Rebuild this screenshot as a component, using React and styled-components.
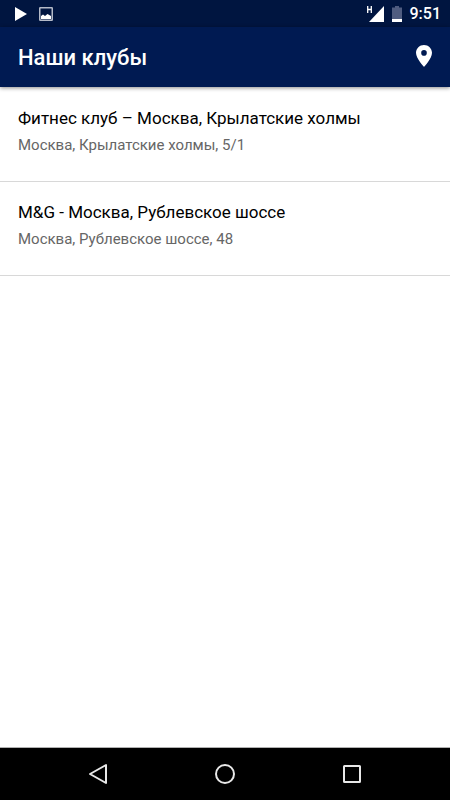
import styled, { createGlobalStyle } from 'styled-components';

const GlobalStyle = createGlobalStyle`
    * {
        box-sizing: border-box;
    }

    body {
        margin: 0;
        background: #fff;
        font-family: Roboto, 'Noto Sans', sans-serif;
    }
`;

const Screen = styled.div`
    display: flex;
    flex-direction: column;
    min-height: 100vh;
`;

const StatusBar = styled.div`
    display: flex;
    justify-content: space-between;
    align-items: center;
    height: 27px;
    padding: 0 9px 0 15px;
    background: #001540;
    color: #fff;
`;

const StatusGroup = styled.div`
    display: flex;
    align-items: center;
    gap: ${props => props.$gap};
`;

const Clock = styled.time`
    font-size: 16px;
    line-height: 20px;
    font-weight: 500;
`;

const AppBar = styled.header`
    display: flex;
    justify-content: space-between;
    align-items: center;
    height: 60px;
    padding: 0 14px 0 18px;
    background: #001a52;
    color: #fff;
    box-shadow: 0 1px 4px rgba(0, 0, 0, 0.45);
`;

const Title = styled.h1`
    margin: 0;
    padding-top: 2px;
    font-size: 22px;
    line-height: 28px;
    font-weight: 500;
`;

const IconButton = styled.button`
    display: flex;
    justify-content: center;
    align-items: center;
    padding: 0;
    border: 0;
    background: none;
    color: inherit;
    cursor: pointer;
`;

const ClubList = styled.ul`
    flex: 1;
    list-style: none;
    margin: 0;
    padding: 1px 0 0;
`;

const ClubItem = styled.li`
    padding: 17px 18px 25px;
    border-bottom: 1px solid #d8d8d8;
`;

const ClubName = styled.h2`
    margin: 0 0 3px;
    color: #000;
    font-size: 17px;
    line-height: 26px;
    font-weight: 400;
`;

const ClubAddress = styled.p`
    margin: 0;
    color: #666;
    font-size: 15px;
    line-height: 22px;
`;

const NavBar = styled.nav`
    display: grid;
    grid-template-columns: repeat(3, 1fr);
    height: 53px;
    padding: 0 34px;
    border-top: 1px solid #b0b0b0;
    background: #000;
    color: #e8e8e8;
`;

const clubs = [
    { name: 'Фитнес клуб – Москва, Крылатские холмы', address: 'Москва, Крылатские холмы, 5/1' },
    { name: 'M&G - Москва, Рублевское шоссе', address: 'Москва, Рублевское шоссе, 48' },
];

const PlayIcon = () => (
    <svg width="12" height="14" viewBox="0 0 12 14" fill="currentColor">
        <path d="M0 0L12 7L0 14Z" />
    </svg>
);

const PictureIcon = () => (
    <svg width="14" height="14" viewBox="0 0 14 14">
        <rect x="0.75" y="0.75" width="12.5" height="12.5" rx="0.5" fill="none" stroke="#b4bac8" strokeWidth="1.5" />
        <path d="M2 12V9L4 7.5L6 9L8.5 7L12 9V12Z" fill="#fff" />
    </svg>
);

// Network type mark and the signal triangle
const SignalIcon = () => (
    <svg width="17" height="16" viewBox="0 0 17 16">
        <path d="M17 0V16H2Z" fill="#fff" />
        <path d="M0.7 0V7M4.3 0V7M0.7 3.5H4.3" fill="none" stroke="#fff" strokeWidth="1.3" />
    </svg>
);

const BatteryIcon = () => (
    <svg width="10" height="16" viewBox="0 0 10 16">
        <path d="M3 0H7V1.5H10V16H0V1.5H3Z" fill="#4f5c80" />
        <path d="M0 13H10V16H0Z" fill="#fff" />
    </svg>
);

const PinIcon = () => (
    <svg width="24" height="28" viewBox="0 0 24 28" fill="currentColor">
        <path
            fillRule="evenodd"
            d="M12 2C7.6 2 4 5.5 4 9.8C4 15.6 12 24 12 24S20 15.6 20 9.8C20 5.5 16.4 2 12 2ZM12 7.1A2.8 2.8 0 1 1 12 12.7A2.8 2.8 0 1 1 12 7.1Z"
        />
    </svg>
);

const NavIcon = ({ children }) => (
    <svg width="24" height="24" viewBox="0 0 24 24" fill="none" stroke="currentColor" strokeWidth="2">
        {children}
    </svg>
);

const App = () => (
    <>
        <GlobalStyle />
        <Screen>
            <StatusBar>
                <StatusGroup $gap="12px">
                    <PlayIcon />
                    <PictureIcon />
                </StatusGroup>
                <StatusGroup $gap="8px">
                    <SignalIcon />
                    <BatteryIcon />
                    <Clock>9:51</Clock>
                </StatusGroup>
            </StatusBar>
            <AppBar>
                <Title>Наши клубы</Title>
                <IconButton type="button" aria-label="Карта">
                    <PinIcon />
                </IconButton>
            </AppBar>
            <ClubList>
                {clubs.map(({ name, address }) => (
                    <ClubItem key={name}>
                        <ClubName>{name}</ClubName>
                        <ClubAddress>{address}</ClubAddress>
                    </ClubItem>
                ))}
            </ClubList>
            <NavBar>
                <IconButton type="button" aria-label="Назад">
                    <NavIcon>
                        <path d="M20 3V21L4 12Z" strokeLinejoin="round" />
                    </NavIcon>
                </IconButton>
                <IconButton type="button" aria-label="Домой">
                    <NavIcon>
                        <circle cx="12" cy="12" r="9" />
                    </NavIcon>
                </IconButton>
                <IconButton type="button" aria-label="Недавние">
                    <NavIcon>
                        <rect x="4" y="4" width="16" height="16" rx="0.5" />
                    </NavIcon>
                </IconButton>
            </NavBar>
        </Screen>
    </>
);

export default App;
